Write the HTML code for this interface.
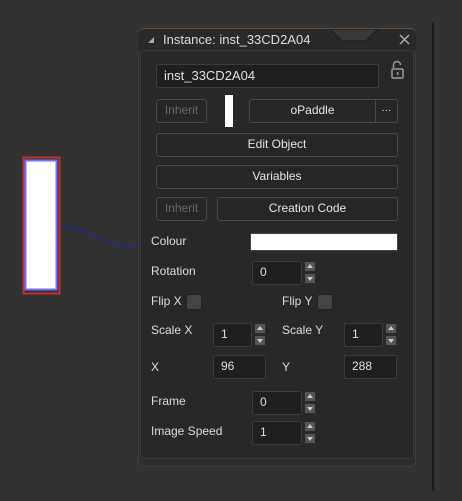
<!DOCTYPE html><html><head><style>
body{margin:0;width:462px;height:501px;background:#323232;position:relative;overflow:hidden;font-family:"Liberation Sans",sans-serif;font-size:12px;color:#ddd}
.a{position:absolute;box-sizing:border-box}
.in{background:#1f1f1f;border:1px solid #3c3c3c;border-radius:2px;padding-left:7px;line-height:21px;color:#e0e0e0}
.bt{background:#262626;border:1px solid #4a4a4a;border-radius:3px;text-align:center;line-height:21px;color:#e6e6e6}
.dis{color:#666}
.sp{width:12px;height:11px;background:#555;border:1px solid #2a2a2a}
.sp.u::after{content:"";position:absolute;left:2px;top:2px;border-left:3px solid transparent;border-right:3px solid transparent;border-bottom:4px solid #ccc}
.sp.d::after{content:"";position:absolute;left:2px;top:3px;border-left:3px solid transparent;border-right:3px solid transparent;border-top:4px solid #ccc}
.lb{color:#ddd}
.cb{width:16px;height:16px;background:#444;border:1px solid #222;border-radius:2px}
</style></head><body>
<div class="a" style="left:432px;top:22px;width:2px;height:469px;background:#1c1c1c"></div>
<svg class="a" style="left:0;top:0" width="140" height="300">
<path d="M58 226 C90 226 100 247 138 247" stroke="#2a2a8a" stroke-width="1.5" fill="none"/>
<rect x="23.5" y="157.5" width="36" height="136" fill="none" stroke="#c03030" stroke-width="2"/>
<rect x="25.5" y="160.5" width="31" height="129" fill="#fff" stroke="#7070ff" stroke-width="2"/>
</svg>
<div class="a" style="left:138px;top:28px;width:278px;height:439px;background:#2c2c2c;border:1px solid #3e3e3e;border-radius:6px"></div>
<div class="a" style="left:138px;top:28px;width:278px;height:22px;background:#2a2928;border-radius:6px 6px 0 0;border-top:1px solid #5a5048"></div>
<svg class="a" style="left:330px;top:29px" width="50" height="14"><path d="M0 0 L12 12 L36 12 L48 0Z" fill="#3a3836" stroke="#1a1a1a"/></svg>
<div class="a" style="left:148px;top:37px;width:0;height:0;border-left:6px solid transparent;border-bottom:6px solid #aaa"></div>
<div class="a" style="left:163px;top:31px;line-height:17px;font-size:13px;color:#ddd">Instance: inst_33CD2A04</div>
<svg class="a" style="left:399px;top:34px" width="12" height="12"><path d="M1 1L10 10M10 1L1 10" stroke="#aaa" stroke-width="1.5"/></svg>
<div class="a" style="left:140px;top:50px;width:274px;height:409px;background:#282828;border:1px solid #3a3a3a;border-radius:5px"></div>
<div class="a in" style="left:156px;top:64px;width:223px;height:24px;font-size:13px">inst_33CD2A04</div>
<svg class="a" style="left:390px;top:60px" width="16" height="20"><path d="M3.5 8 V5 a3.5 3.5 0 0 1 7 0" stroke="#999" stroke-width="1.5" fill="none"/><rect x="2" y="9" width="11" height="9" rx="1" fill="none" stroke="#999" stroke-width="1.5"/><rect x="7" y="12" width="1.5" height="3" fill="#999"/></svg>
<div class="a bt dis" style="left:156px;top:99px;width:51px;height:24px">Inherit</div>
<div class="a" style="left:225px;top:95px;width:8px;height:32px;background:#fff"></div>
<div class="a bt" style="left:249px;top:99px;width:127px;height:24px;border-radius:3px 0 0 3px">oPaddle</div>
<div class="a bt" style="left:375px;top:99px;width:23px;height:24px;border-radius:0 3px 3px 0;font-size:10px">···</div>
<div class="a bt" style="left:156px;top:133px;width:242px;height:24px">Edit Object</div>
<div class="a bt" style="left:156px;top:165px;width:242px;height:24px">Variables</div>
<div class="a bt dis" style="left:156px;top:197px;width:51px;height:24px">Inherit</div>
<div class="a bt" style="left:217px;top:197px;width:181px;height:24px">Creation Code</div>
<div class="a lb" style="left:151px;top:234px">Colour</div>
<div class="a" style="left:250px;top:233px;width:148px;height:18px;background:#fff;border:1px solid #444"></div>
<div class="a lb" style="left:151px;top:264px">Rotation</div>
<div class="a in" style="left:252px;top:261px;width:50px;height:24px">0</div>
<div class="a sp u" style="left:304px;top:261px"></div><div class="a sp d" style="left:304px;top:273px"></div>
<div class="a lb" style="left:151px;top:294px">Flip X</div>
<div class="a cb" style="left:186px;top:294px"></div>
<div class="a lb" style="left:282px;top:294px">Flip Y</div>
<div class="a cb" style="left:317px;top:294px"></div>
<div class="a lb" style="left:151px;top:323px">Scale X</div>
<div class="a in" style="left:213px;top:323px;width:39px;height:24px">1</div>
<div class="a sp u" style="left:254px;top:323px"></div><div class="a sp d" style="left:254px;top:335px"></div>
<div class="a lb" style="left:282px;top:323px">Scale Y</div>
<div class="a in" style="left:344px;top:323px;width:39px;height:24px">1</div>
<div class="a sp u" style="left:385px;top:323px"></div><div class="a sp d" style="left:385px;top:335px"></div>
<div class="a lb" style="left:151px;top:360px">X</div>
<div class="a in" style="left:213px;top:355px;width:53px;height:24px">96</div>
<div class="a lb" style="left:282px;top:360px">Y</div>
<div class="a in" style="left:344px;top:355px;width:53px;height:24px">288</div>
<div class="a lb" style="left:151px;top:394px">Frame</div>
<div class="a in" style="left:252px;top:391px;width:50px;height:24px">0</div>
<div class="a sp u" style="left:304px;top:391px"></div><div class="a sp d" style="left:304px;top:403px"></div>
<div class="a lb" style="left:151px;top:424px">Image Speed</div>
<div class="a in" style="left:252px;top:421px;width:50px;height:24px">1</div>
<div class="a sp u" style="left:304px;top:421px"></div><div class="a sp d" style="left:304px;top:433px"></div>
</body></html>
